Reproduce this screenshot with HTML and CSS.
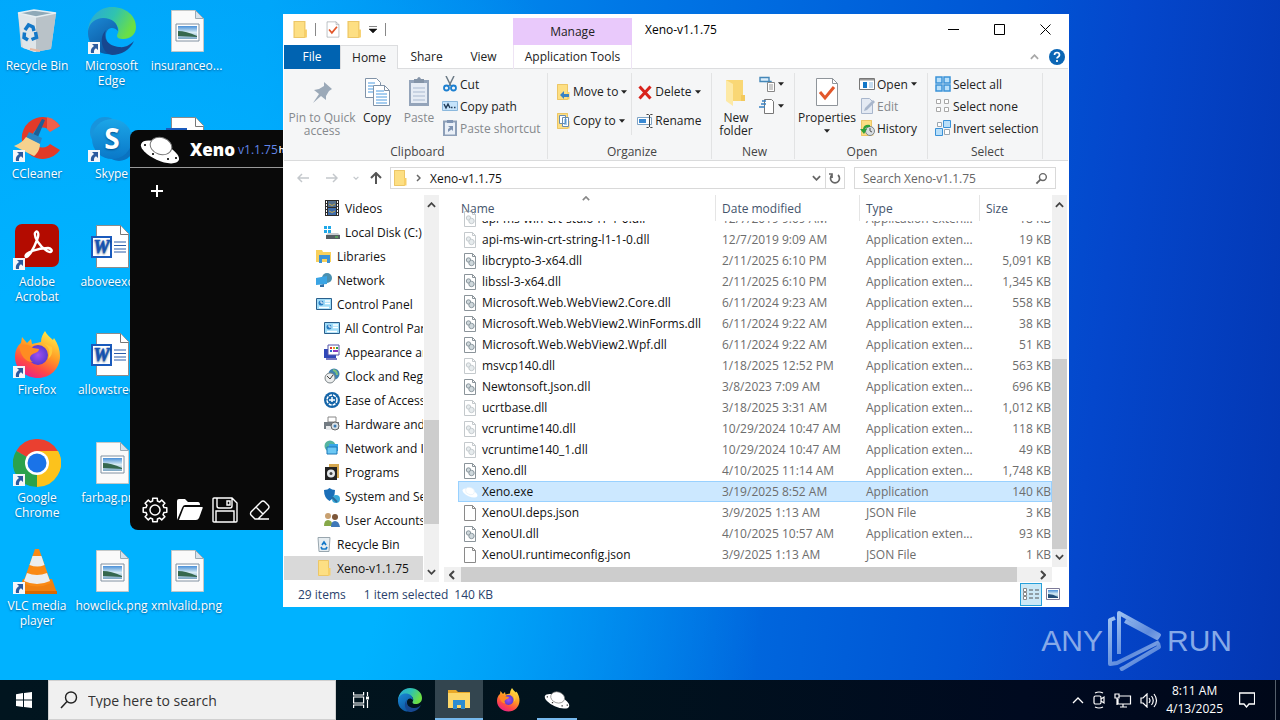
FILE: index.html
```html
<!DOCTYPE html>
<html lang="en">
<head>
    <meta charset="UTF-8">
    <meta name="viewport" content="width=device-width, initial-scale=1.0">
    <title>Desktop</title>
    <link rel="stylesheet" href="styles.css">
</head>
<body>
    <!-- Shared icons -->
    <svg class="sprite" aria-hidden="true">
        <defs>
            <linearGradient id="gEdge" x1="0" y1="0" x2="1" y2="0.4"><stop offset="0" stop-color="#2aa5dd"/><stop offset="0.55" stop-color="#2fc3b0"/><stop offset="1" stop-color="#6bdf45"/></linearGradient>
            <linearGradient id="gEdge2" x1="0" y1="0" x2="0.6" y2="1"><stop offset="0" stop-color="#1b8ad6"/><stop offset="1" stop-color="#0b559f"/></linearGradient>
            <linearGradient id="gFox" x1="0.8" y1="0" x2="0.3" y2="1"><stop offset="0" stop-color="#fff04a"/><stop offset="0.45" stop-color="#ff9a25"/><stop offset="0.75" stop-color="#ff4a45"/><stop offset="1" stop-color="#e8208a"/></linearGradient>
            <radialGradient id="gGlobe"><stop offset="0" stop-color="#a050f0"/><stop offset="1" stop-color="#5a3ad0"/></radialGradient>
            <linearGradient id="gPic" x1="0" y1="0" x2="0" y2="1"><stop offset="0" stop-color="#4a90d8"/><stop offset="0.5" stop-color="#d8ecf4"/><stop offset="1" stop-color="#7ba6c4"/></linearGradient>
            <linearGradient id="gSkype" x1="0" y1="0" x2="0" y2="1"><stop offset="0" stop-color="#1ca6e8"/><stop offset="1" stop-color="#0a78c8"/></linearGradient>
            <linearGradient id="gMark" x1="0" y1="0" x2="1" y2="1"><stop offset="0" stop-color="#9cc0f0"/><stop offset="0.6" stop-color="#5f8bdc"/><stop offset="1" stop-color="#9ab8ec"/></linearGradient>
        </defs>
        <symbol id="shortcut" viewBox="0 0 12 12"><path d="M0 0h12v12H0z" fill="#f4f6fa"/><path d="M4 2h6v6L8 6.200Q5.500 7.500 6 11H3Q2 6.500 6 4z" fill="#2c5a9e"/></symbol>
        <symbol id="bin" viewBox="0 0 48 48"><path d="M5 6l16-3 22 3-5 36-17 3-13-5z" fill="#d3d9dd"/><path d="M5 6l18 4v35L10 41z" fill="#dfe5e9"/><path d="M23 10l20-4-5 36-15 3z" fill="#b9c2c8"/><path d="M5 6l16-3 22 3-20 4z" fill="#8fa9b8" stroke="#e6eef2" stroke-width="1.500"/><path d="M12 23l3.500-5 4.500 2 1 4M22.500 25l1 5.500-5 2M15 33l-4-2.500.5-5" fill="none" stroke="#1478c8" stroke-width="3.500"/><path d="M17 42l10 2" stroke="#e8b8a0" stroke-width="2"/></symbol>
        <symbol id="edge" viewBox="0 0 48 48"><path d="M0 24C1 10 11 0 24 0c14 0 24 9 24 20 0 8-6 12-13 12-6 0-7-3-5-6 2-5-2-11-9-11C12 15 3 19 0 24z" fill="url(#gEdge)"/><path d="M0 24c1-8 8-13 15-13 9 0 15 5 15 13-4-5-11-4-12 3-1 8 5 16 14 17-15 9-33-2-32-20z" fill="url(#gEdge2)"/><path d="M18 23c-4 9 3 16 13 17 7 1 12-3 15-6-4 9-13 14-22 14-10-2-14-17-6-25z" fill="#17478f"/></symbol>
        <symbol id="firefox" viewBox="0 0 48 48"><path d="M28 11c0-5 2-8 4-11 2 4 5 6 8 9l1-2c4 6 6 12 6 18 0 13-10 22-22 22S2 38 2 26c0-6 2-11 6-14l1-6 5 6 4-4 1 5z" fill="url(#gFox)"/><circle cx="25" cy="24" r="10" fill="url(#gGlobe)"/><path d="M6 15c6-3 10-1 14 2l6 1c0 3-4 4-6 5-4 2-4 6 0 8-8 0-12-6-14-16z" fill="#ff8c22"/><path d="M30 12c6 3 8 9 5 16 4-3 5-8 4-12z" fill="#ffc93a"/></symbol>
        <symbol id="ccleaner" viewBox="0 0 48 48"><path d="M47 11A21 21 0 1 0 47 35l-10-6a10 10 0 1 1 0-13z" fill="#e23a28"/><path d="M47 11l-10 6-3-3V2q8 2 13 9z" fill="#f0604a"/><path d="M29 4l3 1-7 17-5-2z" fill="#1e5f96"/><path d="M16 17l13 6-2 6-14-6z" fill="#2a86c4"/><path d="M13 22l14 7c0 6-4 11-6 12L1 31q8-3 12-9z" fill="#f5d28e"/></symbol>
        <symbol id="skype" viewBox="0 0 48 48"><circle cx="17" cy="17" r="15" fill="#1894dc"/><circle cx="31" cy="31" r="15" fill="#0a72c0"/><circle cx="24" cy="24" r="20" fill="url(#gSkype)"/><text x="24" y="34" text-anchor="middle" font-family="Open Sans, sans-serif" font-weight="700" font-size="28" fill="#fff">S</text></symbol>
        <symbol id="acrobat" viewBox="0 0 48 48"><rect x="2" y="1" width="44" height="43" rx="7" fill="#b30b00"/><path d="M13 34c-3-4 12-9 22-9 6 1 4 6-1 3C26 23 21 14 22 10c2-4 5 0 2 7-3 8-8 17-11 17z" fill="none" stroke="#fff" stroke-width="2.400"/></symbol>
        <symbol id="chrome" viewBox="0 0 48 48"><path d="M24 24L3.200 12a24 24 0 0 1 41.600 0z" fill="#ea4030"/><path d="M24 24L44.800 12A24 24 0 0 1 24 48z" fill="#fcc21c"/><path d="M24 24v24A24 24 0 0 1 3.200 12z" fill="#2ba24c"/><path d="M24 12h21a24 24 0 0 1 .5 22L24 48l11-18z" fill="#fcc21c"/><circle cx="24" cy="24" r="12" fill="#fff"/><circle cx="24" cy="24" r="9.500" fill="#1a73e8"/></symbol>
        <symbol id="vlc" viewBox="0 0 48 48"><path d="M10 32h29l5 14H5z" fill="#f08010"/><path d="M5 44h39v3H5z" fill="#d86800"/><path d="M22 2h4l12 34q-14 7-28 0z" fill="#fa8a14"/><path d="M19.500 9h9l3 9q-7 3-15 0zM14 26q10 4 20 0l3 8q-13 6-26 0z" fill="#eceeee"/></symbol>
        <symbol id="picfile" viewBox="0 0 48 48"><path d="M8.500 3.500h24l8 8v33h-32z" fill="#fafafa" stroke="#c4c8c8"/><path d="M32.500 3.500v8h8z" fill="#d6e2ec" stroke="#9aaab4"/><path d="M13 17h23v17H13z" fill="#fff" stroke="#8090a0"/><path d="M15 19h19v13H15z" fill="url(#gPic)"/><path d="M15 24q8 0 19 5v1l-19-1z" fill="#35684e"/></symbol>
        <symbol id="wordfile" viewBox="0 0 48 48"><path d="M8.500 2.500h24l8 8v34h-32z" fill="#fff" stroke="#8c8c8c"/><path d="M32.500 2.500v9h8" fill="#fff" stroke="#777"/><path d="M26 19h12M26 22.500h12M26 26h12M26 29h12" stroke="#2a5caa"/><path d="M4 14h19v20H4z" fill="#fff" stroke="#1a5abc" stroke-width="2"/><text x="13.500" y="30" text-anchor="middle" font-family="Liberation Serif, serif" font-style="italic" font-weight="700" font-size="18" fill="#1a5abc" stroke="#1a5abc" stroke-width=".6">W</text></symbol>
        <symbol id="ufo" viewBox="0 0 40 28"><ellipse cx="20" cy="16" rx="20.500" ry="8.500" transform="rotate(24 20 16)" fill="#fff"/><ellipse cx="21" cy="10" rx="11" ry="8.500" transform="rotate(18 21 10)" fill="#fff" stroke="#777" stroke-width="1"/><path d="M4 9h2M12 18h2M27 23h2M35 22h2" stroke="#333" stroke-width="2"/></symbol>
        <symbol id="ufo-pale" viewBox="0 0 16 16"><ellipse cx="8" cy="9" rx="8" ry="3.500" transform="rotate(24 8 9)" fill="#fff"/><ellipse cx="8" cy="7" rx="4.500" ry="3.500" transform="rotate(18 8 7)" fill="#fff" stroke="#e2eef8" stroke-width=".6"/></symbol>
        <symbol id="folder" viewBox="0 0 16 16"><path d="M2 0h11v16H2z" fill="#fddf83"/><path d="M2.500.5h10v15h-10z" fill="none" stroke="#ecc667"/><path d="M12 8h2.500v7.500H12z" fill="#f7cf68"/></symbol>
        <symbol id="check" viewBox="0 0 24 30"><path d="M1.500 1.500h16l5 5v22h-21z" fill="#fff" stroke="#8f959b"/><path d="M17.500 1.500v5h5" fill="none" stroke="#8f959b"/><path d="M5 15l5 6L19 10" fill="none" stroke="#e2572b" stroke-width="3"/></symbol>
        <symbol id="caret" viewBox="0 0 7 4"><path d="M0 0h7L3.500 4z" fill="currentColor"/></symbol>
        <symbol id="up" viewBox="0 0 10 6"><path d="M1 5l4-4 4 4" fill="none" stroke="currentColor" stroke-width="2"/></symbol>
        <symbol id="down" viewBox="0 0 10 6"><path d="M1 1l4 4 4-4" fill="none" stroke="currentColor" stroke-width="2"/></symbol>
        <symbol id="page" viewBox="0 0 16 16"><path d="M2.500.5h8l3 3v12h-11z" fill="#fff" stroke="#8a8a8a"/><path d="M10.500.5v3h3" fill="none" stroke="#8a8a8a"/></symbol>
        <symbol id="dll" viewBox="0 0 16 16"><path d="M2.500.5h8l3 3v12h-11z" fill="#fff" stroke="#8b949a"/><path d="M10.500.5v3h3" fill="none" stroke="#8b949a"/><circle cx="6.500" cy="7" r="2.200" fill="#cfd8dc" stroke="#8b989f"/><circle cx="9.500" cy="10" r="2.700" fill="#cfd8dc" stroke="#8b989f"/></symbol>
        <symbol id="screen" viewBox="0 0 16 16"><path d="M.5 2.500h15v11H.5z" fill="#9fdcf8" stroke="#2a5f8c"/><circle cx="5" cy="7" r="2.500" fill="#2b7ec4"/><path d="M5 4.500V7h2.500" stroke="#fff" fill="none"/><path d="M9 5h5M9 7.500h5M3 11.500h10" stroke="#fff" stroke-width="1.500"/></symbol>
        <symbol id="lens" viewBox="0 0 14 14"><circle cx="8.500" cy="5.500" r="3.700" fill="none" stroke="currentColor" stroke-width="1.500"/><path d="M6 8L1.500 12.500" stroke="currentColor" stroke-width="2"/></symbol>
    </svg>

    <div class="desktop">
        <nav class="icons">
            <a class="shortcut" href="#"><svg><use href="#bin"/></svg>Recycle Bin</a>
            <a class="shortcut" href="#"><svg><use href="#ccleaner"/><use href="#shortcut" y="35" width="12" height="12"/></svg>CCleaner</a>
            <a class="shortcut" href="#"><svg><use href="#acrobat"/><use href="#shortcut" y="35" width="12" height="12"/></svg>Adobe<br>Acrobat</a>
            <a class="shortcut" href="#"><svg><use href="#firefox"/><use href="#shortcut" y="35" width="12" height="12"/></svg>Firefox</a>
            <a class="shortcut" href="#"><svg><use href="#chrome"/><use href="#shortcut" y="35" width="12" height="12"/></svg>Google<br>Chrome</a>
            <a class="shortcut" href="#"><svg><use href="#vlc"/><use href="#shortcut" y="35" width="12" height="12"/></svg>VLC media<br>player</a>
            <a class="shortcut" href="#"><svg><use href="#edge"/><use href="#shortcut" y="35" width="12" height="12"/></svg>Microsoft<br>Edge</a>
            <a class="shortcut" href="#"><svg><use href="#skype"/><use href="#shortcut" y="35" width="12" height="12"/></svg>Skype</a>
            <a class="shortcut" href="#"><svg><use href="#wordfile"/></svg>aboveexc...</a>
            <a class="shortcut" href="#"><svg><use href="#wordfile"/></svg>allowstree...</a>
            <a class="shortcut" href="#"><svg><use href="#picfile"/></svg>farbag.png</a>
            <a class="shortcut" href="#"><svg><use href="#picfile"/></svg>howclick.png</a>
            <a class="shortcut" href="#"><svg><use href="#picfile"/></svg>insuranceo...</a>
            <a class="shortcut" href="#"><svg><use href="#wordfile"/></svg></a>
            <a class="shortcut last" href="#"><svg><use href="#picfile"/></svg>xmlvalid.png</a>
        </nav>

        <div class="watermark">
            <span>ANY</span>
            <svg viewBox="0 0 56 62" width="56" height="62"><g fill="none" stroke="url(#gMark)" stroke-width="4" stroke-linejoin="round"><path d="M8 8L3 10v44l7-1L52 32"/><path d="M12 44V3l40 22-2 3-32-17"/><path d="M14 57l1 2 37-22-1-4"/></g></svg>
            <span>RUN</span>
        </div>

        <!-- Xeno window -->
        <section class="xeno">
            <header class="xeno-head">
                <svg width="42" height="28"><use href="#ufo"/></svg>
                <strong>Xeno</strong>
                <span class="version">v1.1.75</span>
                <small>https</small>
            </header>
            <button class="xeno-add" aria-label="New tab"><svg width="12" height="12" viewBox="0 0 12 12"><path d="M6 0v12M0 6h12" stroke="#fff" stroke-width="2"/></svg></button>
            <footer class="xeno-tools">
                <button aria-label="Settings"><svg width="26" height="26" viewBox="-13 -13 26 26" fill="none" stroke="#fff" stroke-width="1.500" stroke-linejoin="round"><circle r="5"/><path d="M9-2.400L11.800-2.300V2.300L9 2.400 8 4.700 9.900 6.700 6.700 9.900 4.700 8 2.400 9 2.300 11.800H-2.300L-2.400 9-4.700 8-6.700 9.900-9.900 6.700-8 4.700-9 2.400-11.800 2.300V-2.300L-9-2.400-8-4.700-9.900-6.700-6.700-9.900-4.700-8-2.400-9-2.300-11.800H2.300L2.400-9 4.700-8 6.700-9.900 9.900-6.700 8-4.700z"/></svg></button>
                <button aria-label="Open"><svg width="26" height="22" viewBox="0 0 26 22"><path d="M0 21V2q0-2 2-2h6l3 3h10q2 0 2 3H8q-2 0-3 3z" fill="#fff"/><path d="M7 8h18q1 0 .7 1L22 19q-1 2-3 2H2z" fill="#fff"/></svg></button>
                <button aria-label="Save"><svg width="26" height="26" viewBox="0 0 26 26" fill="none" stroke="#fff" stroke-width="1.400"><path d="M1 2q0-1 1-1h18l5 5v18q0 1-1 1H2q-1 0-1-1zM5 1v8q0 2 2 2h11q2 0 2-2V1M15 4h3v4h-3zM4 25V14h18v11"/></svg></button>
                <button aria-label="Clear"><svg width="22" height="22" viewBox="0 0 22 22" fill="none" stroke="#fff" stroke-width="1.400"><path d="M2 13L12 3q2-2 4 0l3 3q2 2 0 4L9 20H6l-4-4q-1-1 0-3zM7 8l7 7M6 20h14"/></svg></button>
            </footer>
        </section>

        <!-- File explorer window -->
        <main class="explorer">
            <header class="titlebar">
                <div class="quick">
                    <svg width="18" height="17"><use href="#folder"/></svg>
                    <i></i>
                    <svg class="quick-check" width="14" height="17"><use href="#check"/></svg>
                    <svg width="18" height="17"><use href="#folder"/></svg>
                    <svg class="quick-more" width="8" height="7" viewBox="0 0 8 7"><path d="M0 .5h8M0 3h8L4 7z" fill="#111" stroke="#111" stroke-width=".5"/></svg>
                    <i></i>
                </div>
                <div class="manage">Manage</div>
                <h1>Xeno-v1.1.75</h1>
                <div class="win-buttons">
                    <button aria-label="Minimize"><svg width="11" height="11"><path d="M0 5.500h11" stroke="#000"/></svg></button>
                    <button aria-label="Maximize"><svg width="11" height="11"><path d="M.5.5h10v10H.5z" fill="none" stroke="#000"/></svg></button>
                    <button aria-label="Close"><svg width="11" height="11"><path d="M.5.5l10 10m0-10l-10 10" stroke="#000"/></svg></button>
                </div>
            </header>

            <nav class="tabs">
                <button class="tab-file">File</button>
                <button class="tab-active">Home</button>
                <button>Share</button>
                <button>View</button>
                <button class="tab-tools">Application Tools</button>
                <svg class="collapse" width="9" height="6"><use href="#up"/></svg>
                <svg width="16" height="16" viewBox="0 0 16 16"><circle cx="8" cy="8" r="8" fill="#0b66b5"/><path d="M5.500 6q0-2.500 2.500-2.500T10.500 6Q10.500 7 9 8q-1 .7-1 1.500M8 11v2" fill="none" stroke="#fff" stroke-width="1.700"/></svg>
            </nav>

            <section class="ribbon">
                <div class="group clipboard">
                    <div class="group-items">
                        <button class="big pin dim"><svg width="32" height="32" viewBox="0 0 32 32"><path d="M18 6l8 7-3 2-3 5 0 4-5-4-8 7 6-9-5-4 5-1 5-3z" fill="#9ba9b8"/></svg>Pin to Quick<br>access</button>
                        <button class="big copy"><svg width="32" height="32" viewBox="0 0 32 32"><g fill="#fff" stroke="#8093a8"><path d="M4.500 2.500h11l4 4v15h-15z"/><path d="M12.500 9.500h11l5 5v15h-16z"/><path d="M23.500 9.500v5h5" fill="none"/></g><path d="M7 7h7M7 10h5M7 13h5M7 16h5M15 15h8M15 18h11M15 21h11M15 24h11M15 27h11" stroke="#4c9be0"/></svg>Copy</button>
                        <button class="big paste dim"><svg width="32" height="32" viewBox="0 0 32 32"><path d="M6 4h20v26H6z" fill="#94a4ba"/><path d="M8 7h16v20H8z" fill="#e6ecf5"/><path d="M11 3h3q2-4 4 0h3v4H11z" fill="#8494a8"/><path d="M10 12h12M10 16h12M10 20h12M10 24h12" stroke="#a9b9d0"/></svg>Paste</button>
                        <div class="stack">
                            <button><svg viewBox="0 0 16 16"><path d="M4 0l5 10M12 0L7 10" stroke="#6c7a86" stroke-width="1.500"/><circle cx="4.500" cy="12" r="2.500" fill="none" stroke="#1c7fd0" stroke-width="1.800"/><circle cx="11.500" cy="12" r="2.500" fill="none" stroke="#1c7fd0" stroke-width="1.800"/></svg>Cut</button>
                            <button><svg viewBox="0 0 16 16"><path d="M.5 3.500h15v9H.5z" fill="#c5e3fb" stroke="#8bb8dd"/><path d="M2 6l2 4 2-4 2 4M9 9.500h1.500M12 9.500h1.500" fill="none" stroke="#223c58" stroke-width="1.400"/></svg>Copy path</button>
                            <button class="dim"><svg viewBox="0 0 16 16"><path d="M2 1.500h12v14H2z" fill="#eaf0f8" stroke="#8d9fb8" stroke-width="2"/><path d="M5 0h6v3H5zM6 6h5v5L9.500 9.500 6 12V9l2-1.500z" fill="#7e93b2"/></svg>Paste shortcut</button>
                        </div>
                    </div>
                    <span>Clipboard</span>
                </div>
                <div class="group organize">
                    <div class="group-items">
                        <div class="stack wide">
                            <button><svg viewBox="0 0 16 16"><use href="#folder"/><path d="M5 11l4-4v3h5v3H9v2z" fill="#3a82c4"/></svg>Move to <svg class="caret"><use href="#caret"/></svg></button>
                            <button><svg viewBox="0 0 16 16"><use href="#folder"/><path d="M4.500 2.500h6v8h-6zM7.500 4.500h6v9h-6z" fill="#fff" stroke="#6a8cae"/><path d="M9 7h3M9 9h3M9 11h3" stroke="#4c9be0"/></svg>Copy to <svg class="caret"><use href="#caret"/></svg></button>
                        </div>
                        <div class="stack wide second">
                            <button><svg viewBox="0 0 16 16"><path d="M2.500 2.500l11 12M13.500 2.500l-11 12" stroke="#d8231c" stroke-width="3"/></svg>Delete <svg class="caret"><use href="#caret"/></svg></button>
                            <button><svg viewBox="0 0 16 16"><path d="M.5 4.500h14v7H.5z" fill="#fff" stroke="#7fa3c4"/><path d="M2 6h7v4H2z" fill="#3a8ad4"/><path d="M9.500 1.500h2l1 1 1-1h2M12.500 2v12M9.500 14.500h2l1-1 1 1h2" fill="none" stroke="#444"/></svg>Rename</button>
                        </div>
                    </div>
                    <span>Organize</span>
                </div>
                <div class="group new">
                    <div class="group-items">
                        <button class="big"><svg width="32" height="32" viewBox="0 0 32 32"><path d="M6 4h17v21H6z" fill="#f9d775"/><path d="M6 4l7 4v22l-7-5z" fill="#fde9a5"/><path d="M21 19h4v6h-4z" fill="#f3c95c"/></svg>New<br>folder</button>
                        <div class="stack">
                            <button aria-label="New item"><svg viewBox="0 0 16 16"><path d="M1 1.500h9v4H1zM3 5.500h9v4" fill="#dceefb" stroke="#4587b8" stroke-width="1.400"/><path d="M8.500 6.500h7v9h-7z" fill="#fff" stroke="#888"/><path d="M10 9h4M10 11h4M10 13h4" stroke="#999"/></svg><svg class="caret"><use href="#caret"/></svg></button>
                            <button aria-label="Easy access"><svg viewBox="0 0 16 16"><path d="M5.500 1.500h7l2 2v12h-9z" fill="#fff" stroke="#777"/><path d="M0 9h6M2 6h5M3 3h4" stroke="#3a82c4" stroke-width="1.500"/></svg><svg class="caret"><use href="#caret"/></svg></button>
                        </div>
                    </div>
                    <span>New</span>
                </div>
                <div class="group open">
                    <div class="group-items">
                        <button class="big"><svg width="32" height="32" viewBox="-4 0 32 30"><use href="#check" width="24" height="30"/></svg>Properties<svg class="caret"><use href="#caret"/></svg></button>
                        <div class="stack">
                            <button><svg viewBox="0 0 16 16"><path d="M.5 2.500h15v11H.5z" fill="#fff" stroke="#777"/><path d="M1 3h14v1.500H1z" fill="#999"/><path d="M4 6h4v6H4z" fill="#1478c8"/><path d="M10 7h4M10 9h4M10 11h4" stroke="#8bb8dd"/></svg>Open <svg class="caret"><use href="#caret"/></svg></button>
                            <button class="dim"><svg viewBox="0 0 16 16"><path d="M2.500.5h8l3 3v12h-11z" fill="#e4eaf3" stroke="#a8b6cc"/><path d="M5 13l1-3 8-8 2 2-8 8z" fill="#a8b6cc"/></svg>Edit</button>
                            <button><svg viewBox="0 0 16 16"><use href="#folder"/><circle cx="11" cy="11" r="4.500" fill="#d9dee2" stroke="#7a8288"/><path d="M11 8v3l2 1" fill="none" stroke="#555"/><path d="M11 5q-6-1-7 4H1l4 5 3-5H6q1-2 5-2z" fill="#2fa13c"/></svg>History</button>
                        </div>
                    </div>
                    <span>Open</span>
                </div>
                <div class="group select">
                    <div class="group-items">
                        <div class="stack">
                            <button><svg viewBox="0 0 16 16"><path d="M1 1h6v6H1zM9 1h6v6H9zM1 9h6v6H1zM9 9h6v6H9z" fill="#b8dffa" stroke="#3a92d8" stroke-width="1.500"/></svg>Select all</button>
                            <button><svg viewBox="0 0 16 16"><path d="M1.500 1.500h4v4h-4zM9.500 1.500h4v4h-4zM1.500 9.500h4v4h-4zM9.500 9.500h4v4h-4z" fill="#fff" stroke="#a8a8a8"/></svg>Select none</button>
                            <button><svg viewBox="0 0 16 16"><path d="M2.500 2.500h4v4h-4zM9.500 9.500h5v5h-5z" fill="#fff" stroke="#9aa6b0"/><path d="M8.500.5h7v7h-7zM.5 8.500h7v7h-7z" fill="#b8dffa" stroke="#3a92d8"/></svg>Invert selection</button>
                        </div>
                    </div>
                    <span>Select</span>
                </div>
            </section>

            <div class="address-row">
                <button aria-label="Back"><svg width="12" height="10" viewBox="0 0 12 10"><path d="M12 5H1m4-4L1 5l4 4" fill="none" stroke="#c4c8cc" stroke-width="1.500"/></svg></button>
                <button aria-label="Forward"><svg width="12" height="10" viewBox="0 0 12 10"><path d="M0 5h11M7 1l4 4-4 4" fill="none" stroke="#c4c8cc" stroke-width="1.500"/></svg></button>
                <button class="recent" aria-label="Recent"><svg width="6" height="4"><use href="#down"/></svg></button>
                <button class="go-up" aria-label="Up"><svg width="12" height="12" viewBox="0 0 12 12"><path d="M6 12V1M1 6l5-5 5 5" fill="none" stroke="#555" stroke-width="2"/></svg></button>
                <div class="address">
                    <svg width="18" height="16"><use href="#folder"/></svg>
                    <svg class="crumb" width="5" height="8" viewBox="0 0 5 8"><path d="M1 1l3 3-3 3" fill="none" stroke="#666" stroke-width="1.500"/></svg>
                    <span>Xeno-v1.1.75</span>
                    <svg class="drop" width="9" height="6"><use href="#down"/></svg>
                    <button aria-label="Refresh"><svg width="12" height="13" viewBox="0 0 12 13"><path d="M3 3a4.500 4.500 0 1 0 6 0M3 6V2H0" fill="none" stroke="#666" stroke-width="1.700"/></svg></button>
                </div>
                <label class="search">
                    <input type="text" placeholder="Search Xeno-v1.1.75" aria-label="Search folder">
                    <svg width="13" height="13"><use href="#lens"/></svg>
                </label>
            </div>

            <div class="content">
                <ul class="tree">
                    <li class="deep"><a href="#"><svg viewBox="0 0 16 16"><path d="M1 0h14v16H1z" fill="#2b2b2b"/><path d="M4 1h8v6H4z" fill="#54708c"/><path d="M4 8h8v7H4z" fill="#3f6ca8"/><path d="M2.500 1v14M13.500 1v14" stroke="#fff" stroke-dasharray="2 1"/><path d="M5 4q3 3 6 0M5 11q3 3 6 0" stroke="#c8a84a" fill="none"/></svg>Videos</a></li>
                    <li class="deep"><a href="#"><svg viewBox="0 0 16 16"><path d="M0 2h3v3H0zM4 2h3v3H4zM0 6h3v3H0zM4 6h3v3H4z" fill="#1fa8e8"/><path d="M4 9h10l2 2H2z" fill="#c8ccd0"/><path d="M2 11h14v4H2z" fill="#555d63"/><path d="M11 13h3" stroke="#5dde58"/></svg>Local Disk (C:)</a></li>
                    <li><a href="#"><svg viewBox="0 0 16 16"><path d="M0 2h6l1 2h8v10H0z" fill="#f8d05c"/><path d="M3 7h11v8h-3v-4H6v4H3z" fill="#3a92d8"/></svg>Libraries</a></li>
                    <li><a href="#"><svg viewBox="0 0 16 16"><circle cx="11" cy="6" r="5" fill="#4a90b0"/><path d="M0 6l11-2v8l-11 1z" fill="#3aa4e4"/><path d="M4 13l4-1v3H4z" fill="#3070a8"/></svg>Network</a></li>
                    <li><a href="#"><svg><use href="#screen"/></svg>Control Panel</a></li>
                    <li class="deep"><a href="#"><svg><use href="#screen"/></svg>All Control Panel Items</a></li>
                    <li class="deep"><a href="#"><svg viewBox="0 0 16 16"><path d="M0 5h12v9H0z" fill="#3048b8"/><path d="M4 1h11v10H4z" fill="#fff" stroke="#55a"/><path d="M6 3h2v2H6z" fill="#d33"/><path d="M9 3h2v2H9z" fill="#e8a020"/><path d="M12 3h2v2h-2z" fill="#28a048"/><path d="M6 6h2v2H6z" fill="#2870d0"/><path d="M9 6h5v2H9z" fill="#8a3ac0"/><path d="M2 15h11" stroke="#7878c0" stroke-width="2"/></svg>Appearance and Personalization</a></li>
                    <li class="deep"><a href="#"><svg viewBox="0 0 16 16"><circle cx="10" cy="6" r="5.500" fill="#3f82b0"/><path d="M9 2q4 1 4 5" stroke="#7fc07a" stroke-width="2" fill="none"/><circle cx="6" cy="10" r="5" fill="#eceeee" stroke="#7c8488"/><path d="M3 8l3 3 3-4" fill="none" stroke="#444"/></svg>Clock and Region</a></li>
                    <li class="deep"><a href="#"><svg viewBox="0 0 16 16"><circle cx="8" cy="8" r="8" fill="#1565a8"/><circle cx="8" cy="8" r="5" fill="none" stroke="#fff" stroke-width="1.500" stroke-dasharray="3 1"/><path d="M8 5v5M5 8h6" stroke="#fff" stroke-width="1.500"/></svg>Ease of Access</a></li>
                    <li class="deep"><a href="#"><svg viewBox="0 0 16 16"><path d="M4 1h8v5H4z" fill="#fff" stroke="#888"/><path d="M0 6h15v7H0z" fill="#727b82"/><path d="M2 10h6v4H2z" fill="#e8eaec"/><circle cx="11" cy="10" r="4" fill="#d8e0e6" stroke="#666"/><circle cx="11" cy="10" r="1.500" fill="#3a78b0"/></svg>Hardware and Sound</a></li>
                    <li class="deep"><a href="#"><svg viewBox="0 0 16 16"><circle cx="6" cy="6" r="5.500" fill="#56b4a0"/><path d="M5 4h9v7H5z" fill="#39a6e8"/><path d="M3 7h10v7H3z" fill="#6cc8f4" stroke="#1c78b8"/></svg>Network and Internet</a></li>
                    <li class="deep"><a href="#"><svg viewBox="0 0 16 16"><path d="M5 0h10v14H5z" fill="#d6a850"/><path d="M1 3h12v13H1z" fill="#222"/><circle cx="7" cy="9.500" r="4" fill="#e4e8ea"/><circle cx="7" cy="9.500" r="1.500" fill="#444"/></svg>Programs</a></li>
                    <li class="deep"><a href="#"><svg viewBox="0 0 16 16"><path d="M0 2q4 0 5.500-2Q8 2 11 2q0 8-5.500 11Q0 10 0 2z" fill="#1b6fb8"/><circle cx="12" cy="11" r="4" fill="#38a8d8"/><path d="M8 9l5 5" stroke="#2a6a9c" stroke-width="2"/></svg>System and Security</a></li>
                    <li class="deep"><a href="#"><svg viewBox="0 0 16 16"><circle cx="4" cy="4" r="3" fill="#c8a070"/><path d="M0 14q0-6 4-6t5 6z" fill="#86a848"/><circle cx="11" cy="5" r="3" fill="#7c5638"/><path d="M7 15q0-6 4-6t5 6z" fill="#3f78b8"/></svg>User Accounts</a></li>
                    <li><a href="#"><svg viewBox="0 0 16 16"><path d="M2 1.500h12l-1 14H3z" fill="#e6edf1" stroke="#99a6ae"/><path d="M6 9l2-3 2 3m1 2l-1 2H6l-1-2" fill="none" stroke="#1478c8" stroke-width="1.700"/></svg>Recycle Bin</a></li>
                    <li class="selected"><a href="#"><svg><use href="#folder"/></svg>Xeno-v1.1.75</a></li>
                </ul>
                <div class="scroll tree-scroll"><svg><use href="#up"/></svg><i></i><svg><use href="#down"/></svg></div>

                <div class="files">
                    <table>
                        <thead>
                            <tr><th>Name<svg class="sort" width="8" height="5"><use href="#up"/></svg></th><th>Date modified</th><th>Type</th><th>Size</th></tr>
                        </thead>
                        <tbody>
                            <tr class="faded"><td><svg><use href="#dll"/></svg>api-ms-win-crt-stdio-l1-1-0.dll</td><td>12/7/2019 9:09 AM</td><td>Application exten...</td><td>18 KB</td></tr>
                            <tr class="faded"><td><svg><use href="#dll"/></svg>api-ms-win-crt-string-l1-1-0.dll</td><td>12/7/2019 9:09 AM</td><td>Application exten...</td><td>19 KB</td></tr>
                            <tr><td><svg><use href="#dll"/></svg>libcrypto-3-x64.dll</td><td>2/11/2025 6:10 PM</td><td>Application exten...</td><td>5,091 KB</td></tr>
                            <tr><td><svg><use href="#dll"/></svg>libssl-3-x64.dll</td><td>2/11/2025 6:10 PM</td><td>Application exten...</td><td>1,345 KB</td></tr>
                            <tr><td><svg><use href="#dll"/></svg>Microsoft.Web.WebView2.Core.dll</td><td>6/11/2024 9:23 AM</td><td>Application exten...</td><td>558 KB</td></tr>
                            <tr><td><svg><use href="#dll"/></svg>Microsoft.Web.WebView2.WinForms.dll</td><td>6/11/2024 9:22 AM</td><td>Application exten...</td><td>38 KB</td></tr>
                            <tr><td><svg><use href="#dll"/></svg>Microsoft.Web.WebView2.Wpf.dll</td><td>6/11/2024 9:22 AM</td><td>Application exten...</td><td>51 KB</td></tr>
                            <tr class="faded"><td><svg><use href="#dll"/></svg>msvcp140.dll</td><td>1/18/2025 12:52 PM</td><td>Application exten...</td><td>563 KB</td></tr>
                            <tr><td><svg><use href="#dll"/></svg>Newtonsoft.Json.dll</td><td>3/8/2023 7:09 AM</td><td>Application exten...</td><td>696 KB</td></tr>
                            <tr class="faded"><td><svg><use href="#dll"/></svg>ucrtbase.dll</td><td>3/18/2025 3:31 AM</td><td>Application exten...</td><td>1,012 KB</td></tr>
                            <tr class="faded"><td><svg><use href="#dll"/></svg>vcruntime140.dll</td><td>10/29/2024 10:47 AM</td><td>Application exten...</td><td>118 KB</td></tr>
                            <tr class="faded"><td><svg><use href="#dll"/></svg>vcruntime140_1.dll</td><td>10/29/2024 10:47 AM</td><td>Application exten...</td><td>49 KB</td></tr>
                            <tr><td><svg><use href="#dll"/></svg>Xeno.dll</td><td>4/10/2025 11:14 AM</td><td>Application exten...</td><td>1,748 KB</td></tr>
                            <tr class="selected"><td><svg><use href="#ufo-pale"/></svg>Xeno.exe</td><td>3/19/2025 8:52 AM</td><td>Application</td><td>140 KB</td></tr>
                            <tr><td><svg><use href="#page"/></svg>XenoUI.deps.json</td><td>3/9/2025 1:13 AM</td><td>JSON File</td><td>3 KB</td></tr>
                            <tr><td><svg><use href="#dll"/></svg>XenoUI.dll</td><td>4/10/2025 10:57 AM</td><td>Application exten...</td><td>93 KB</td></tr>
                            <tr><td><svg><use href="#page"/></svg>XenoUI.runtimeconfig.json</td><td>3/9/2025 1:13 AM</td><td>JSON File</td><td>1 KB</td></tr>
                        </tbody>
                    </table>
                    <div class="scroll-h"><svg width="6" height="10" viewBox="0 0 6 10"><path d="M5 1L1 5l4 4" fill="none" stroke="#444" stroke-width="2"/></svg><i></i><svg width="6" height="10" viewBox="0 0 6 10"><path d="M1 1l4 4-4 4" fill="none" stroke="#444" stroke-width="2"/></svg></div>
                </div>
                <div class="scroll file-scroll"><svg><use href="#up"/></svg><i></i><svg><use href="#down"/></svg></div>
            </div>

            <footer class="status">
                <span>29 items</span>
                <span class="chosen">1 item selected</span>
                <span>140 KB</span>
                <div class="views">
                    <button class="on" aria-label="Details"><svg width="16" height="14" viewBox="0 0 16 14"><path d="M.5 1.500h3v3h-3zM.5 5.500h3v3h-3zM.5 9.500h3v3h-3z" fill="#fff" stroke="#888"/><path d="M6 3h4m2 0h4M6 7h4m2 0h4M6 11h4m2 0h4" stroke="#555"/></svg></button>
                    <button aria-label="Large icons"><svg width="14" height="12" viewBox="0 0 14 12"><path d="M.5.5h13v11H.5z" fill="#fff" stroke="#7d7a98"/><path d="M2 2h10v8H2z" fill="url(#gPic)"/><path d="M2 6q5 0 10 3v1H2z" fill="#234e78"/></svg></button>
                </div>
            </footer>
        </main>
    </div>

    <footer class="taskbar">
        <button class="start" aria-label="Start"><svg width="16" height="16" viewBox="0 0 16 16"><path d="M0 2.200L7 1v6.500H0zM8 .9L16 0v7.500H8zM0 8.500h7V15l-7-1zM8 8.500h8V16l-8-1z" fill="#fff"/></svg></button>
        <label class="task-search">
            <svg width="18" height="18" viewBox="0 0 18 18"><circle cx="11" cy="6.500" r="5.500" fill="none" stroke="#222" stroke-width="1.400"/><path d="M7 10.500L1 17" stroke="#222" stroke-width="1.500"/></svg>
            <input type="text" placeholder="Type here to search" aria-label="Search">
        </label>
        <button class="task" aria-label="Task view"><svg width="17" height="16" viewBox="0 0 17 16" fill="none" stroke="#fff" stroke-width="1.200"><path d="M.6 0v3h10V0M.6 5h10v6H.6zM.6 16v-3h10v3M14.500 0v4M14.500 8v8"/><path d="M13 6h3" stroke-width="3"/></svg></button>
        <button class="task" aria-label="Edge"><svg width="24" height="24"><use href="#edge"/></svg></button>
        <button class="task active" aria-label="File Explorer"><svg width="24" height="20" viewBox="0 0 24 20"><path d="M1 1h8l2 2h12v16H1z" fill="#e9a928"/><path d="M1 4h22v15H1z" fill="#fcd76a"/><path d="M6 11h12v9h-4v-4h-4v4H6z" fill="#2c8cd0"/></svg></button>
        <button class="task" aria-label="Firefox"><svg width="24" height="24"><use href="#firefox"/></svg></button>
        <button class="task running" aria-label="Xeno"><svg width="26" height="18"><use href="#ufo"/></svg></button>
        <div class="tray">
            <svg width="12" height="7" viewBox="0 0 12 7"><path d="M1 6l5-5 5 5" fill="none" stroke="#fff" stroke-width="1.300"/></svg>
            <svg width="14" height="18" viewBox="0 0 14 18" fill="none" stroke="#fff" stroke-width="1.200"><rect x="2" y="5" width="7" height="8" rx="1.500"/><path d="M9 8l3-2v6l-3-2M3 2q4-2 8 0M3 16q4 2 8 0"/></svg>
            <svg width="18" height="15" viewBox="0 0 18 15" fill="none" stroke="#fff" stroke-width="1.200"><path d="M5 3h11.500v8H4V6M9 11v3M6 14h7M1 1h4v4H1zM3 5v7"/></svg>
            <svg width="18" height="15" viewBox="0 0 18 15" fill="none" stroke="#fff" stroke-width="1.200"><path d="M1 5h2l4-4v13l-4-4H1zM9 5q2 2.500 0 5M11.500 3q3.500 4.500 0 9M14 1q5 6.500 0 13"/></svg>
            <time class="clock">8:11 AM<br>4/13/2025</time>
            <svg class="notes" width="16" height="16" viewBox="0 0 16 16"><path d="M.6 1h15v11H10l-2.500 3L5 12H.6z" fill="none" stroke="#fff" stroke-width="1.300"/></svg>
        </div>
    </footer>
</body>
</html>
```

FILE: styles.css
```css
* {
    margin: 0;
    padding: 0;
    box-sizing: border-box;
}

body {
    height: 100vh;
    display: flex;
    flex-direction: column;
    overflow: hidden;
    font-family: "Open Sans", sans-serif;
    font-size: 12px;
    line-height: 15px;
    color: #222;
}

button,
input {
    font: inherit;
    color: inherit;
    border: none;
    background: none;
    outline: none;
}

button {
    display: flex;
    align-items: center;
    justify-content: center;
    white-space: nowrap;
}

a {
    color: inherit;
    text-decoration: none;
}

svg {
    flex: none;
}

.sprite {
    position: absolute;
    width: 0;
    height: 0;
}

/* Desktop */
.desktop {
    flex: 1;
    position: relative;
    min-height: 0;
    background: radial-gradient(ellipse 640px 700px at 10% 80%, #00b2ff 40%, transparent 100%), linear-gradient(96deg, #00a4fa 0%, #00a0f8 20%, #0078e6 46%, #0054d4 76%, #0447cc 84%, #0336b2 100%);
}

.icons {
    display: grid;
    grid-auto-flow: column;
    grid-template-rows: repeat(6, 108px);
    grid-template-columns: 74px 75px 75px;
    padding-top: 7px;
}

.shortcut {
    display: block;
    text-align: center;
    white-space: nowrap;
    color: #fff;
    text-shadow: 0 1px 2px rgba(0, 40, 90, 0.6);
}

.shortcut svg {
    display: block;
    width: 48px;
    height: 48px;
    margin: 0 auto 3px;
}

.shortcut.last {
    grid-row: 6;
}

.watermark {
    position: absolute;
    right: 48px;
    bottom: 8px;
    display: flex;
    align-items: center;
    gap: 4px;
    font-family: "Liberation Sans", sans-serif;
    font-size: 30px;
    line-height: 62px;
    color: #86a9e8;
}

/* Xeno window */
.xeno {
    position: absolute;
    left: 130px;
    top: 130px;
    width: 600px;
    height: 400px;
    display: flex;
    flex-direction: column;
    border-radius: 8px;
    background-color: #090909;
    color: #fff;
}

.xeno-head {
    display: flex;
    align-items: center;
    height: 38px;
    padding: 2px 9px 0;
    border-bottom: 1px solid #999;
}

.xeno-head strong {
    margin: 0 3px 0 9px;
    font-size: 17px;
    font-weight: 800;
}

.xeno-head .version {
    color: #6285e8;
}

.xeno-head small {
    margin-left: 1px;
    font-size: 9px;
    font-weight: 600;
}

.xeno-add {
    width: 54px;
    height: 46px;
}

.xeno-tools {
    display: flex;
    align-items: center;
    margin-top: auto;
    height: 40px;
    padding-left: 7px;
}

.xeno-tools button {
    width: 35px;
}

/* Explorer window */
.explorer {
    position: absolute;
    left: 283px;
    top: 14px;
    width: 786px;
    height: 593px;
    display: flex;
    flex-direction: column;
    border: 1px solid #fff;
    border-top: none;
    background-color: #fff;
}

.titlebar {
    display: flex;
    height: 31px;
}

.quick {
    display: flex;
    align-items: center;
    width: 229px;
    padding-left: 7px;
}

.quick i {
    width: 1px;
    height: 13px;
    margin: 0 9px 0 6px;
    background-color: #888;
}

.quick-check {
    margin: 0 5px 0 1px;
}

.quick-more {
    margin: 0 2px 0 6px;
}

.manage {
    width: 119px;
    margin-top: 4px;
    line-height: 28px;
    text-align: center;
    background-color: #e9c9fb;
}

h1 {
    margin-left: 13px;
    font-size: 12px;
    font-weight: 400;
    line-height: 31px;
    color: #000;
}

.win-buttons {
    display: flex;
    margin-left: auto;
}

.win-buttons button {
    width: 46px;
}

.tabs {
    display: flex;
    align-items: center;
    height: 24px;
    padding-right: 3px;
    border-bottom: 1px solid #dcdddf;
}

.tabs button {
    width: 57px;
    height: 24px;
}

.tabs .tab-file {
    width: 56px;
    background-color: #0063b1;
    color: #fff;
}

.tabs .tab-active {
    width: 58px;
    border: 1px solid #dcdddf;
    border-bottom: none;
    background-color: #f5f6f7;
}

.tabs .tab-tools {
    width: 119px;
    margin-left: 1px;
    border: 1px solid #eee4f4;
    border-width: 0 1px;
}

.collapse {
    margin: 0 10px 0 auto;
    color: #a8a8a8;
}

.ribbon {
    display: flex;
    height: 92px;
    background-color: #f5f6f7;
    border-bottom: 1px solid #dadbdc;
}

.group {
    display: flex;
    flex-direction: column;
    margin: 4px 0 1px;
    border-right: 1px solid #e2e3e4;
}

.group > span {
    margin-top: auto;
    text-align: center;
    color: #444;
}

.group-items {
    display: flex;
}

.clipboard {
    width: 264px;
    padding-left: 4px;
}

.organize {
    width: 164px;
    padding-left: 5px;
}

.new {
    width: 83px;
    padding-left: 3px;
}

.open {
    width: 133px;
    padding-left: 2px;
}

.select {
    width: 115px;
    padding-left: 5px;
}

.big {
    flex-direction: column;
    justify-content: flex-start;
    width: 42px;
    line-height: 13px;
    padding-top: 3px;
}

.big > svg:first-child {
    margin-bottom: 3px;
}

.big.pin {
    width: 68px;
}

.open .big {
    width: 60px;
}

.dim {
    color: #85898d;
}

.stack {
    display: flex;
    flex-direction: column;
    margin-left: 2px;
}

.stack button {
    height: 22px;
    gap: 2px;
    justify-content: flex-start;
}

.stack button > svg {
    width: 16px;
    height: 16px;
}

.big > .caret {
    width: 6px;
    height: 4px;
    margin-top: 5px;
}

.stack button > .caret {
    width: 6px;
    height: 4px;
    margin-left: 1px;
}

.stack.wide {
    padding-top: 4px;
}

.stack.wide button {
    height: 29px;
}

.stack.second {
    margin-left: 4px;
    padding-left: 5px;
    border-left: 1px solid #e2e3e4;
}

/* Address bar */
.address-row {
    display: flex;
    align-items: center;
    height: 34px;
    padding: 0 12px 0 4px;
}

.address-row > button {
    width: 29px;
    height: 22px;
}

.address-row > .recent,
.address-row > .go-up {
    width: 20px;
    color: #c4c8cc;
}

.address {
    flex: 1;
    display: flex;
    align-items: center;
    height: 22px;
    margin-left: 4px;
    border: 1px solid #d9d9d9;
    color: #111;
}

.crumb {
    margin: 0 9px 0 7px;
}

.drop {
    margin: 0 4px 0 auto;
    color: #666;
}

.address button {
    width: 19px;
    height: 20px;
    border-left: 1px solid #d9d9d9;
}

.search {
    display: flex;
    align-items: center;
    width: 202px;
    height: 22px;
    margin-left: 9px;
    padding: 0 7px 0 8px;
    border: 1px solid #d9d9d9;
    color: #666;
}

.search input {
    flex: 1;
    min-width: 0;
}

input::placeholder {
    color: inherit;
    opacity: 1;
}

/* Folder tree and files */
.content {
    flex: 1;
    display: flex;
    min-height: 0;
}

.tree {
    width: 139px;
    padding-top: 1px;
    list-style: none;
    overflow: hidden;
    color: #111;
}

.tree a {
    display: flex;
    align-items: center;
    gap: 5px;
    height: 24px;
    padding-left: 32px;
    white-space: nowrap;
}

.tree .deep a {
    padding-left: 40px;
}

.tree svg {
    width: 16px;
    height: 16px;
}

.tree .selected {
    background-color: #d9d9d9;
}

.scroll {
    display: flex;
    flex-direction: column;
    align-items: center;
    width: 15px;
    padding: 7px 0;
    background-color: #f0f0f0;
    color: #444;
}

.scroll svg {
    width: 9px;
    height: 6px;
}

.scroll i {
    width: 100%;
    background-color: #cdcdcd;
}

.scroll svg:last-child {
    margin-top: auto;
}

.tree-scroll {
    margin: 0 1px;
}

.tree-scroll i {
    height: 104px;
    margin-top: 212px;
}

.file-scroll {
    margin: 0 1px 15px 0;
}

.file-scroll i {
    height: 190px;
    margin-top: 151px;
}

.files {
    flex: 1;
    display: flex;
    flex-direction: column;
    padding-left: 4px;
    overflow: hidden;
}

table,
thead,
tbody {
    display: block;
}

thead {
    position: relative;
    background-color: #fff;
}

/* list is scrolled by part of a row */
tbody {
    margin-top: -13px;
}

tr {
    display: grid;
    grid-template-columns: 257px 144px 120px 1fr;
    align-items: center;
    height: 21px;
    margin-left: 14px;
    border: 1px solid transparent;
    color: #6d6d6d;
    white-space: nowrap;
}

thead tr {
    height: 26px;
    border-width: 0 0 0 1px;
}

th {
    position: relative;
    line-height: 24px;
    padding: 2px 6px 0;
    border-right: 1px solid #e5e5e5;
    font-weight: 400;
    text-align: left;
    color: #44546c;
}

th:first-child {
    padding-left: 2px;
}

th:last-child {
    border: none;
}

.sort {
    position: absolute;
    left: 48%;
    top: 1px;
    color: #888;
}

td {
    padding-left: 6px;
}

td:first-child {
    display: flex;
    align-items: center;
    gap: 4px;
    padding-left: 3px;
    color: #111;
}

td:last-child {
    text-align: right;
}

td svg {
    width: 16px;
    height: 16px;
}

.faded svg {
    opacity: 0.5;
}

tr.selected {
    background-color: #cce8ff;
    border-color: #99d1ff;
}

.scroll-h {
    display: flex;
    align-items: center;
    height: 15px;
    margin-top: 2px;
    padding: 0 6px 0 5px;
    background-color: #f0f0f0;
}

.scroll-h i {
    flex: 1;
    height: 15px;
    margin: 0 23px 0 6px;
    background-color: #cdcdcd;
}

.status {
    display: flex;
    align-items: center;
    height: 24px;
    padding: 0 4px 0 14px;
    color: #2a3f6c;
}

.status .chosen {
    margin: 0 6px 0 18px;
}

.views {
    display: flex;
    margin-left: auto;
}

.views button {
    width: 22px;
    height: 23px;
}

.views .on {
    border: 1px solid #26a0da;
    background-color: #cbe8f6;
}

/* Taskbar */
.taskbar {
    display: flex;
    height: 40px;
    background: linear-gradient(90deg, #01151f, #01131d 45%, #000a20 80%, #000819);
    color: #fff;
}

.start {
    width: 48px;
}

.task-search {
    display: flex;
    align-items: center;
    gap: 10px;
    width: 288px;
    margin-right: 1px;
    padding: 0 11px;
    border: 1px solid #d0d0d0;
    background-color: #f0f0f0;
    color: #333;
    font-size: 14px;
}

.task-search input {
    flex: 1;
    min-width: 0;
}

.task {
    width: 48px;
    margin-right: 1px;
}

.task.active {
    border-bottom: 2px solid #76b9ed;
    background-color: #33454f;
}

.task.running {
    background: linear-gradient(#76b9ed, #76b9ed) bottom / 40px 2px no-repeat;
}

.tray {
    display: flex;
    align-items: center;
    gap: 8px;
    margin-left: auto;
    margin-right: 4px;
    padding-right: 20px;
    border-right: 1px solid #55606c;
}

.clock {
    line-height: 18px;
    text-align: center;
}

.notes {
    margin-left: 8px;
}
```
